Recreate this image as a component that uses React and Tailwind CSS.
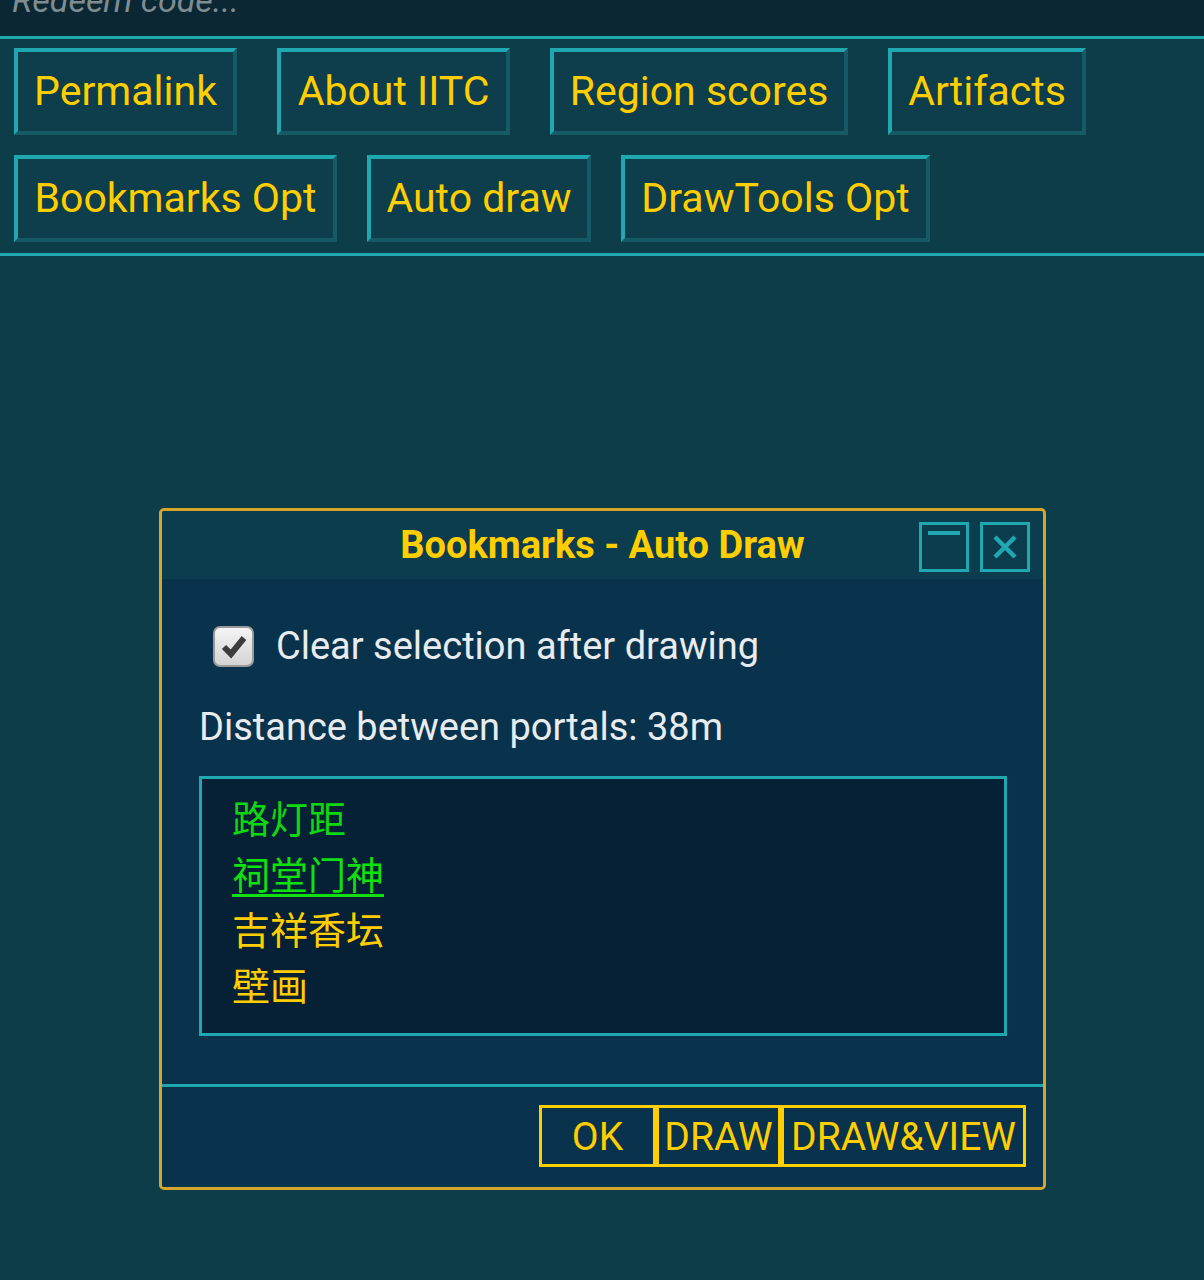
import React, { useState } from 'react';

const toolRow1 = [
    { label: 'Permalink', w: 'w-[223px]' },
    { label: 'About IITC', w: 'w-[233px]' },
    { label: 'Region scores', w: 'w-[298px]' },
    { label: 'Artifacts', w: 'w-[198px]' },
];
const toolRow2 = [
    { label: 'Bookmarks Opt', w: 'w-[323px]' },
    { label: 'Auto draw', w: 'w-[224px]' },
    { label: 'DrawTools Opt', w: 'w-[309px]' },
];

const items = [
    { name: '路灯距', color: 'text-[#10d810]' },
    { name: '祠堂门神', color: 'text-[#10e010] underline decoration-[3px] underline-offset-[5px]' },
    { name: '吉祥香坛', color: 'text-[#ffce00]' },
    { name: '壁画', color: 'text-[#ffce00]' },
];

const ToolButton = ({ label, w }) => (
    <a className={`${w} h-[87px] flex items-center justify-center text-[41px] text-[#ffce00] bg-[#0e3d4b] border-[4px] border-t-[#20a8b1] border-l-[#20a8b1] border-b-[#155a64] border-r-[#155a64] whitespace-nowrap cursor-pointer`}>
        {label}
    </a>
);

const App = () => {
    const [clearAfter, setClearAfter] = useState(true);

    return (
        <div className="min-h-screen w-[1204px] bg-[#0e3d4a] font-['Roboto','Noto_Sans_CJK_SC',sans-serif] overflow-hidden">
            {/* redeem input */}
            <div className="h-[36px] bg-[#0a2733] overflow-hidden px-[12px]">
                <div className="-mt-[25px] text-[34px] italic text-[#7f8c90]">Redeem code...</div>
            </div>
            <div className="h-[3px] bg-[#20a8b1]" />

            {/* toolbox */}
            <div className="pt-[9px] pb-[11px] pl-[14px]">
                <div className="flex gap-[40px]">
                    {toolRow1.map((t) => <ToolButton key={t.label} {...t} />)}
                </div>
                <div className="flex gap-[30px] mt-[20px]">
                    {toolRow2.map((t) => <ToolButton key={t.label} {...t} />)}
                </div>
            </div>
            <div className="h-[3px] bg-[#20a8b1]" />

            {/* dialog */}
            <div className="ml-[159px] mt-[252px] w-[887px] border-[3px] border-[#d6a62a] rounded-[5px] shadow-[inset_0_0_0_1px_#2a8f95] overflow-hidden">
                <div className="relative h-[68px] bg-[#0b3d4f] flex items-center justify-center">
                    <span className="text-[38px] font-bold text-[#ffce00]">Bookmarks - Auto Draw</span>
                    <div className="absolute right-[13px] top-[11px] flex gap-[11px]">
                        <button className="w-[50px] h-[50px] border-[3px] border-[#20a8b1] relative">
                            <span className="absolute left-[6px] right-[6px] top-[6px] h-[4px] bg-[#20a8b1]" />
                        </button>
                        <button className="w-[50px] h-[50px] border-[3px] border-[#20a8b1] flex items-center justify-center">
                            <svg width="30" height="30" viewBox="0 0 30 30">
                                <path d="M5 5 L25 25 M25 5 L5 25" stroke="#20a8b1" strokeWidth="4.5" />
                            </svg>
                        </button>
                    </div>
                </div>

                <div className="bg-[#09324c] pl-[37px] pr-[36px] pt-[45px] pb-[48px]">
                    <label className="h-[44px] flex items-center cursor-pointer" onClick={() => setClearAfter(!clearAfter)}>
                        <span className="ml-[14px] w-[41px] h-[41px] rounded-[7px] border-[2px] border-[#9a9a9a] bg-[linear-gradient(#f4f4f4,#d4d4d4)] flex items-center justify-center">
                            {clearAfter && (
                                <svg width="28" height="28" viewBox="0 0 28 28">
                                    <path d="M4 15 L11 22 L24 6" fill="none" stroke="#3c3c3c" strokeWidth="6" strokeLinejoin="miter" />
                                </svg>
                            )}
                        </span>
                        <span className="ml-[22px] text-[38px] leading-[44px] text-[#e8ecee]">Clear selection after drawing</span>
                    </label>
                    <p className="mt-[37px] text-[38px] text-[#e8ecee] leading-[44px]">Distance between portals: 38m</p>
                    <div className="mt-[27px] h-[260px] border-[3px] border-[#20a8b1] bg-[#062135] pl-[30px] pt-[14px]">
                        {items.map((it) => (
                            <div key={it.name} className={`text-[38px] leading-[55.5px] ${it.color}`}>{it.name}</div>
                        ))}
                    </div>
                </div>

                <div className="h-[3px] bg-[#20a8b1]" />
                <div className="bg-[#09324c] pt-[18px] pb-[20px] pr-[17px] flex justify-end">
                    <button className="w-[117px] h-[62px] border-[3px] border-[#ffce00] text-[39px] text-[#ffce00]">OK</button>
                    <button className="w-[125px] h-[62px] border-[3px] border-[#ffce00] text-[39px] text-[#ffce00] whitespace-nowrap">DRAW</button>
                    <button className="w-[245px] h-[62px] border-[3px] border-[#ffce00] text-[39px] text-[#ffce00] whitespace-nowrap">DRAW&amp;VIEW</button>
                </div>
            </div>
        </div>
    );
};

export default App;
